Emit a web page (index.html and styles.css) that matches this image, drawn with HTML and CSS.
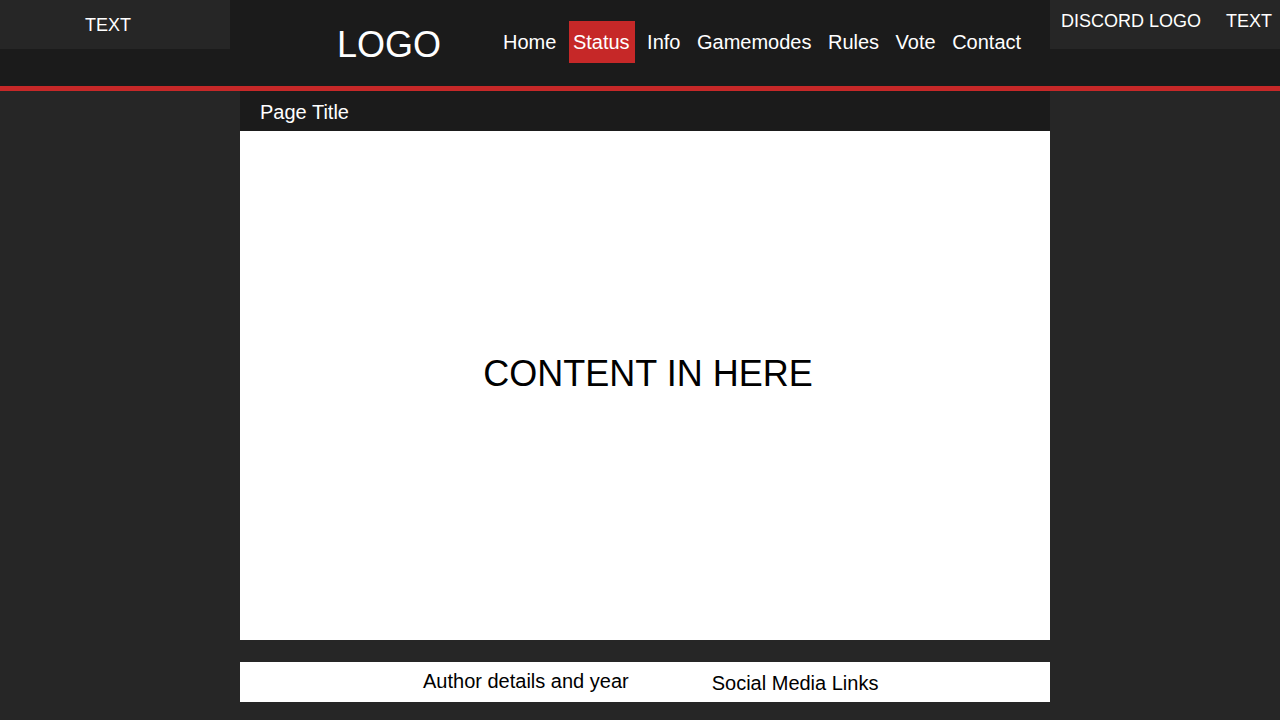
FILE: index.html
```html
<!DOCTYPE html>
<html lang="en">
<head>
<meta charset="utf-8">
<title>Page</title>
<link rel="stylesheet" href="styles.css">
</head>
<body>
<header class="site-header">
  <div class="corner corner-left">TEXT</div>
  <div class="header-center">
    <div class="logo">LOGO</div>
    <nav class="nav">
      <a class="nav-item" href="#">Home</a>
      <a class="nav-item active" href="#">Status</a>
      <a class="nav-item" href="#">Info</a>
      <a class="nav-item" href="#">Gamemodes</a>
      <a class="nav-item" href="#">Rules</a>
      <a class="nav-item" href="#">Vote</a>
      <a class="nav-item" href="#">Contact</a>
    </nav>
  </div>
  <div class="corner corner-right">
    <span class="discord">DISCORD LOGO</span>
    <span class="corner-text">TEXT</span>
  </div>
</header>
<main class="main">
  <div class="page-title">Page Title</div>
  <section class="content">CONTENT IN HERE</section>
  <footer class="footer">
    <span class="author">Author details and year</span>
    <span class="social">Social Media Links</span>
  </footer>
</main>
</body>
</html>
```
FILE: styles.css
```css
html, body {
  margin: 0;
  padding: 0;
}
body {
  background: #262626;
  font-family: "Liberation Sans", Arial, sans-serif;
  color: #fff;
  height: 720px;
  overflow: hidden;
}
.site-header {
  display: flex;
  align-items: flex-start;
  height: 86px;
  background: #1b1b1b;
  border-bottom: 5px solid #c62828;
}
.corner {
  width: 230px;
  height: 49px;
  background: #262626;
  box-sizing: border-box;
  font-size: 18px;
  line-height: 20px;
  flex: none;
}
.corner-left {
  padding: 15px 0 0 85px;
}
.corner-right {
  display: flex;
  padding: 11px 0 0 11px;
  gap: 25px;
}
.header-center {
  flex: 1;
  display: flex;
  align-items: flex-start;
  padding-left: 107px;
}
.logo {
  font-size: 36px;
  line-height: 41px;
  margin-top: 24px;
}
.nav {
  display: flex;
  gap: 8.5px;
  margin-left: 58px;
  margin-top: 21px;
}
.nav-item {
  color: #fff;
  text-decoration: none;
  font-size: 20px;
  line-height: 42px;
  height: 42px;
  padding: 0 4px;
}
.nav-item.active {
  background: #c62828;
  padding: 0 5px 0 4px;
}
.main {
  width: 810px;
  margin: 0 0 0 240px;
}
.page-title {
  height: 40px;
  background: #1b1b1b;
  padding: 3px 0 0 20px;
  box-sizing: border-box;
  font-size: 20px;
  line-height: 37px;
}
.content {
  height: 509px;
  box-sizing: border-box;
  background: #fff;
  color: #000;
  font-size: 36px;
  line-height: 40px;
  text-align: center;
  padding: 223px 0 0 6px;
}
.footer {
  margin-top: 22px;
  height: 40px;
  box-sizing: border-box;
  background: #fff;
  color: #000;
  display: flex;
  align-items: flex-start;
  padding: 9px 0 0 183px;
  font-size: 20px;
  line-height: 20px;
}
.social {
  margin-left: 83px;
  margin-top: 2px;
}
```
